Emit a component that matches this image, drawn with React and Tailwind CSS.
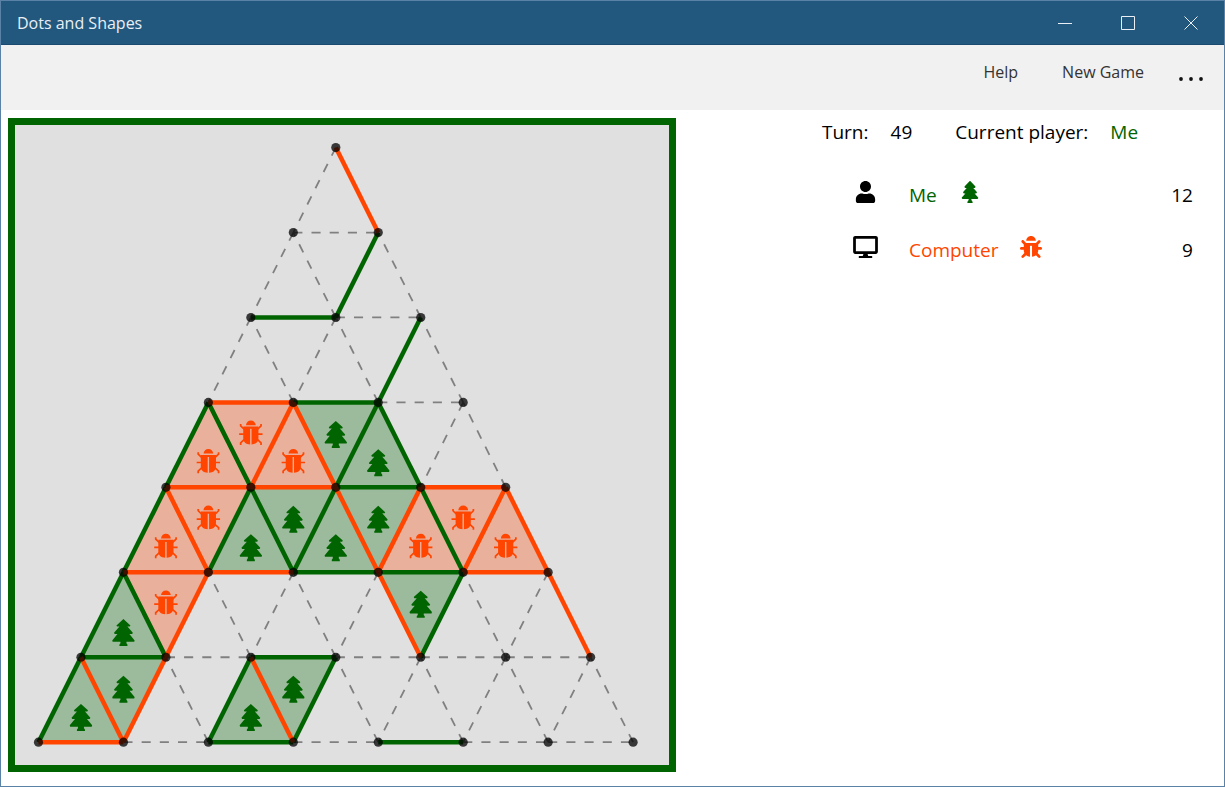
import React from "react";
import { FaBug, FaDesktop, FaTree, FaUser } from "react-icons/fa";

const GREEN = "#006400";
const ORANGE = "#ff4500";
const STEP = 85;
const ROWS = 8;

// Claimed edges: H joins a dot to its right neighbour, L and R run down from it.
const edges = {
  green:
    "L1,1 H2,0 L2,2 H3,1 L3,0 R3,0 L3,2 R3,2 H4,2 L4,0 L4,1 R4,1 L4,2 R4,3 H5,2 H5,3 L5,0 R5,0 L5,4 H6,0 H6,2 L6,0 L6,2 L6,3 H7,2 H7,4",
  orange:
    "R0,0 H3,0 L3,1 R3,1 H4,0 H4,1 H4,3 R4,0 R4,2 L4,3 L4,4 R4,4 H5,0 H5,1 H5,4 L5,1 R5,3 R5,5 R6,0 L6,1 R6,2 H7,0",
};

// Claimed triangles: U has its apex at the dot, D hangs below the edge starting at it.
const cells = {
  green: "D3,1 U3,2 U4,1 D4,1 U4,2 D4,2 D5,3 U5,0 U6,0 D6,0 U6,2 D6,2",
  orange: "U3,0 D3,0 U3,1 U4,0 D4,0 U4,3 D4,3 U4,4 D5,0",
};

const parse = (list) =>
  list.split(" ").map((key) => {
    const [r, c] = key.slice(1).split(",").map(Number);
    return { key, kind: key[0], r, c };
  });

const dot = (r, c) => [321 - (STEP / 2) * r + STEP * c, 22.6 + STEP * r];

const ends = ({ kind, r, c }) => {
  if (kind === "H") return [dot(r, c), dot(r, c + 1)];
  if (kind === "L") return [dot(r, c), dot(r + 1, c)];
  return [dot(r + 1, c + 1), dot(r, c)];
};

const corners = ({ kind, r, c }) =>
  kind === "U"
    ? [dot(r, c), dot(r + 1, c), dot(r + 1, c + 1)]
    : [dot(r, c), dot(r, c + 1), dot(r + 1, c + 1)];

const claimed = new Set([...parse(edges.green), ...parse(edges.orange)].map((e) => e.key));

const dots = [];
const open = [];
for (let r = 0; r < ROWS; r++) {
  for (let c = 0; c <= r; c++) {
    dots.push(dot(r, c));
    const kinds = [];
    if (c < r) kinds.push("H");
    if (r < ROWS - 1) kinds.push("L", "R");
    kinds.forEach((kind) => {
      const key = `${kind}${r},${c}`;
      if (!claimed.has(key)) open.push({ key, kind, r, c });
    });
  }
}

function Edge({ edge, ...rest }) {
  const [[x1, y1], [x2, y2]] = ends(edge);
  return <line x1={x1} y1={y1} x2={x2} y2={y2} {...rest} />;
}

function BugMark() {
  return (
    <g fill={ORANGE}>
      <path d="M-4.9-8.2C-4.6-11-2.6-12.8 0-12.8S4.6-11 4.9-8.2Z" />
      <path d="M-7.6-6.8H7.6V4.5C7.6 8.6 5 10.8.7 11V-4.6H-.7V11C-5 10.8-7.6 8.6-7.6 4.5Z" />
      <path
        d="M-11.7.8H-7M11.7.8H7M-10.2-9.4V-7.6L-6.5-4M10.2-9.4V-7.6L6.5-4M-10.2 11.5V9.4L-6.5 6M10.2 11.5V9.4L6.5 6"
        fill="none"
        stroke={ORANGE}
        strokeWidth="1.7"
      />
    </g>
  );
}

function TreeMark() {
  return (
    <path
      fill={GREEN}
      d="M0-13.5 7-7.2 6.4-6H4L9.4.2 8.8 1.4H6L11.2 7.8 10.8 9.2H3V10.6L4 12V13.5H-4V12L-3 10.6V9.2H-10.8L-11.2 7.8-6 1.4H-8.8L-9.4.2-4-6H-6.4L-7-7.2Z"
    />
  );
}

function Cell({ cell, color }) {
  const pts = corners(cell);
  const x = (pts[0][0] + pts[1][0] + pts[2][0]) / 3;
  const drop = color === GREEN ? 32 : 31;
  const y = pts[0][1] + drop + (cell.kind === "U" ? STEP / 3 : 0);
  return (
    <g>
      <polygon points={pts.map((p) => p.join(",")).join(" ")} fill={color} fillOpacity="0.3" />
      <g transform={`translate(${x} ${y})`}>{color === GREEN ? <TreeMark /> : <BugMark />}</g>
    </g>
  );
}

function Board() {
  return (
    <svg viewBox="0 0 654 640" className="block w-full" role="img" aria-label="Game board">
      {parse(cells.green).map((cell) => (
        <Cell key={cell.key} cell={cell} color={GREEN} />
      ))}
      {parse(cells.orange).map((cell) => (
        <Cell key={cell.key} cell={cell} color={ORANGE} />
      ))}
      {open.map((edge) => (
        <Edge key={edge.key} edge={edge} stroke="#808080" strokeWidth="1.8" strokeDasharray="9.1 9.1" />
      ))}
      {parse(edges.green).map((edge) => (
        <Edge key={edge.key} edge={edge} stroke={GREEN} strokeWidth="4.5" />
      ))}
      {parse(edges.orange).map((edge) => (
        <Edge key={edge.key} edge={edge} stroke={ORANGE} strokeWidth="4.5" />
      ))}
      {dots.map(([x, y]) => (
        <circle key={`${x},${y}`} cx={x} cy={y} r="4.6" fill="#000" fillOpacity="0.75" />
      ))}
    </svg>
  );
}

function TitleBar() {
  return (
    <header className="flex h-11 items-center justify-between border-b border-[#1b4a70] bg-[#22577e] pr-0.5 pl-4 text-[#e9eff4]">
      <h1 className="text-base">Dots and Shapes</h1>
      <div className="flex h-full">
        <button type="button" aria-label="Minimize" className="flex w-[63px] items-center justify-center">
          <svg className="size-4" viewBox="0 0 16 16" stroke="currentColor" fill="none">
            <path d="M1 8.5H15" />
          </svg>
        </button>
        <button type="button" aria-label="Maximize" className="flex w-[63px] items-center justify-center">
          <svg className="size-4" viewBox="0 0 16 16" stroke="currentColor" fill="none">
            <path d="M1.5 1.5H14.5V14.5H1.5Z" />
          </svg>
        </button>
        <button type="button" aria-label="Close" className="flex w-[63px] items-center justify-center">
          <svg className="size-4" viewBox="0 0 16 16" stroke="currentColor" fill="none">
            <path d="M1.5 1.5 14.5 14.5M14.5 1.5 1.5 14.5" />
          </svg>
        </button>
      </div>
    </header>
  );
}

function CommandBar() {
  return (
    <nav className="flex h-[65px] items-start justify-end bg-[#f1f1f1] pt-[15px] pr-[21px] text-base text-[#333]">
      <button type="button" className="mr-11">Help</button>
      <button type="button" className="mr-[35px]">New Game</button>
      <button type="button" aria-label="More" className="pt-[17px]">
        <svg className="h-1 w-6" viewBox="0 0 24 4" fill="#111">
          <circle cx="2" cy="2" r="1.9" />
          <circle cx="12" cy="2" r="1.9" />
          <circle cx="22" cy="2" r="1.9" />
        </svg>
      </button>
    </nav>
  );
}

const players = [
  { name: "Me", score: 12, Icon: FaUser, Mark: FaTree, color: "text-[#006400]" },
  { name: "Computer", score: 9, Icon: FaDesktop, Mark: FaBug, color: "text-[#ff4500]" },
];

function ScorePanel() {
  return (
    <section className="ml-auto w-[402px] pr-[31px] text-[19px] leading-7 text-black">
      <p className="flex whitespace-nowrap">
        <span className="mr-[22px]">Turn:</span>
        <span className="mr-[43px]">49</span>
        <span className="mr-[22px]">Current player:</span>
        <span className="text-[#006400]">Me</span>
      </p>
      <table className="mt-[21px] w-full">
        <tbody>
          {players.map(({ name, score, Icon, Mark, color }) => (
            <tr key={name} className="h-[55px]">
              <td className="w-[87px] pb-[6px]">
                <Icon className="mx-auto h-[22px] w-[25px]" />
              </td>
              <th scope="row" className={`text-left font-normal ${color}`}>
                <span className="flex items-center gap-[22px]">
                  {name}
                  <Mark className="mb-[6px] h-[22px] w-auto" />
                </span>
              </th>
              <td className="text-right">{score}</td>
            </tr>
          ))}
        </tbody>
      </table>
    </section>
  );
}

export default function App() {
  return (
    <div className="min-h-screen border border-[#5a82a6] bg-white font-['Open_Sans','Noto_Sans',sans-serif]">
      <TitleBar />
      <CommandBar />
      <main className="grid grid-cols-[549fr_451fr] items-start pt-2 pl-[7px]">
        <div className="border-[7px] border-[#006400] bg-[#e0e0e0]">
          <Board />
        </div>
        <ScorePanel />
      </main>
    </div>
  );
}
